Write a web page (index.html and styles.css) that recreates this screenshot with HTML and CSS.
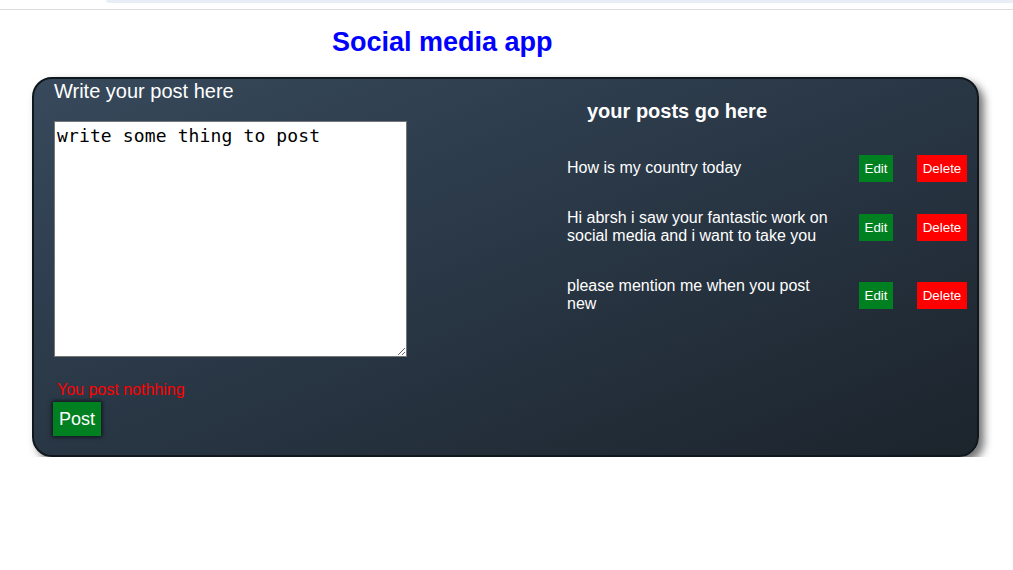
FILE: index.html
```html
<!DOCTYPE html>
<html>
<head>
<meta charset="utf-8">
<link rel="stylesheet" href="styles.css">
</head>
<body>
<div class="chrome"><div class="chrome-bar"></div></div>
<h1 class="title">Social media app</h1>
<div class="card">
  <div class="compose">
    <h2 class="compose-title">Write your post here</h2>
    <textarea class="compose-input">write some thing to post</textarea>
    <p class="error">You post nothhing</p>
    <button class="post-btn">Post</button>
  </div>
  <div class="posts">
    <h3 class="posts-title">your posts go here</h3>
    <div class="post">
      <p class="post-text">How is my country today</p>
      <button class="edit-btn">Edit</button>
      <button class="delete-btn">Delete</button>
    </div>
    <div class="post">
      <p class="post-text">Hi abrsh i saw your fantastic work on social media and i want to take you</p>
      <button class="edit-btn">Edit</button>
      <button class="delete-btn">Delete</button>
    </div>
    <div class="post">
      <p class="post-text">please mention me when you post new</p>
      <button class="edit-btn">Edit</button>
      <button class="delete-btn">Delete</button>
    </div>
  </div>
</div>
</body>
</html>
```

FILE: styles.css
```css
html, body {
  margin: 0;
  padding: 0;
  background: #fff;
  font-family: "Liberation Sans", Arial, sans-serif;
}

.chrome {
  height: 9px;
  border-bottom: 1px solid #dedede;
}

.chrome-bar {
  margin-left: 106px;
  height: 3px;
  background: #e9eef6;
  border-bottom-left-radius: 4px;
}

.title {
  margin: 17px 0 0 332px;
  font-size: 27px;
  line-height: 30px;
  font-weight: bold;
  color: #0000ff;
}

.card {
  margin: 20px 0 0 32px;
  width: 947px;
  height: 380px;
  box-sizing: border-box;
  border: 2px solid #10171d;
  border-radius: 20px;
  background: linear-gradient(to bottom right, #37495b 0%, #2a3847 45%, #1c242c 100%);
  box-shadow: 5px 5px 8px rgba(0, 0, 0, 0.55);
  display: flex;
  padding-left: 20px;
}

.compose {
  width: 353px;
  display: flex;
  flex-direction: column;
  align-items: flex-start;
}

.compose-title {
  margin: 0;
  padding-top: 1px;
  font-size: 20px;
  line-height: 23px;
  font-weight: normal;
  color: #fff;
}

.compose-input {
  margin-top: 18px;
  width: 353px;
  height: 236px;
  box-sizing: border-box;
  border: 1px solid #767676;
  padding: 2px;
  font-family: "DejaVu Sans Mono", monospace;
  font-size: 18px;
  letter-spacing: 0.13px;
  line-height: 24px;
  color: #000;
  background: #fff;
  resize: vertical;
}

.error {
  margin: 24px 0 0 3px;
  font-size: 16px;
  line-height: 18px;
  color: #ff0000;
}

.post-btn {
  margin: 3px 0 0 -1px;
  width: 48px;
  height: 34px;
  border: none;
  background: #008020;
  color: #fff;
  font-family: "Liberation Sans", Arial, sans-serif;
  font-size: 18px;
  padding: 0;
  box-shadow: 0 0 4px 1px rgba(0, 0, 0, 0.7);
}

.posts {
  margin-left: 160px;
  display: flex;
  flex-direction: column;
}

.posts-title {
  margin: 21px 0 0 20px;
  font-size: 20px;
  line-height: 23px;
  font-weight: bold;
  color: #fff;
}

.post {
  display: flex;
  align-items: center;
}

.posts-title + .post {
  margin-top: 20px;
}

.post-text {
  margin: 16px 0;
  width: 270px;
  font-size: 16px;
  line-height: 18px;
  color: #fff;
}

.edit-btn,
.delete-btn {
  height: 27px;
  border: none;
  padding: 0;
  color: #fff;
  font-family: "Liberation Sans", Arial, sans-serif;
  font-size: 13.33px;
}

.edit-btn {
  margin-left: 22px;
  width: 34px;
  background: #008020;
}

.delete-btn {
  margin-left: 24px;
  width: 50px;
  background: #ff0000;
}
```
